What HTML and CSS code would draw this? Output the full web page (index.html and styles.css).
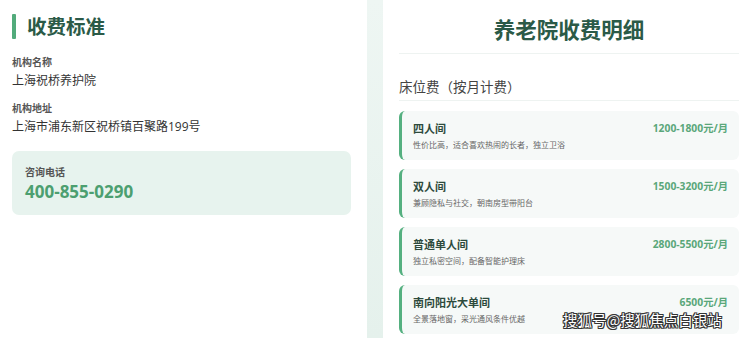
FILE: index.html
```html
<!DOCTYPE html>
<html lang="zh-CN">
<head>
<meta charset="utf-8">
<title>收费标准</title>
<link rel="stylesheet" href="styles.css">
</head>
<body>
<div class="page">
  <section class="left">
    <h2 class="heading"><span class="bar"></span>收费标准</h2>
    <div class="field">
      <div class="label">机构名称</div>
      <div class="value">上海祝桥养护院</div>
    </div>
    <div class="field field-2">
      <div class="label">机构地址</div>
      <div class="value">上海市浦东新区祝桥镇百聚路199号</div>
    </div>
    <div class="contact">
      <div class="label">咨询电话</div>
      <div class="phone">400-855-0290</div>
    </div>
  </section>
  <div class="gutter"></div>
  <section class="right">
    <h1 class="main-title">养老院收费明细</h1>
    <h3 class="sub-title">床位费（按月计费）</h3>
    <div class="cards">
      <div class="card">
        <div class="card-row">
          <span class="card-name">四人间</span>
          <span class="card-price">1200-1800元/月</span>
        </div>
        <div class="card-desc">性价比高，适合喜欢热闹的长者，独立卫浴</div>
      </div>
      <div class="card">
        <div class="card-row">
          <span class="card-name">双人间</span>
          <span class="card-price">1500-3200元/月</span>
        </div>
        <div class="card-desc">兼顾隐私与社交，朝南房型带阳台</div>
      </div>
      <div class="card">
        <div class="card-row">
          <span class="card-name">普通单人间</span>
          <span class="card-price">2800-5500元/月</span>
        </div>
        <div class="card-desc">独立私密空间，配备智能护理床</div>
      </div>
      <div class="card">
        <div class="card-row">
          <span class="card-name">南向阳光大单间</span>
          <span class="card-price">6500元/月</span>
        </div>
        <div class="card-desc">全景落地窗，采光通风条件优越</div>
      </div>
    </div>
  </section>
  <div class="watermark">搜狐号@搜狐焦点白银站</div>
</div>
</body>
</html>
```

FILE: styles.css
```css
* { box-sizing: border-box; margin: 0; padding: 0; }

html, body {
  width: 740px;
  height: 338px;
  overflow: hidden;
  background: #ffffff;
}

body {
  font-family: "Open Sans", "Noto Sans CJK SC", sans-serif;
  color: #333;
}

.page {
  position: relative;
  display: flex;
  width: 740px;
  height: 338px;
}

.left {
  width: 367px;
  padding: 14px 16px 0 12px;
  background: #fff;
}

.heading {
  display: flex;
  align-items: center;
  gap: 11px;
  height: 25px;
  font-size: 19.5px;
  font-weight: 700;
  color: #2b5a47;
  line-height: 25px;
}

.bar {
  width: 4px;
  height: 25px;
  background: #52ab7b;
  border-radius: 1px;
}

.field { margin-top: 16px; }
.field-2 { margin-top: 11px; }

.label {
  font-size: 10px;
  line-height: 14px;
  font-weight: 700;
  color: #555;
}

.value {
  margin-top: 3px;
  font-size: 12px;
  line-height: 18px;
  color: #333;
}

.contact {
  margin-top: 15px;
  padding: 14px 13px 12px 13px;
  background: #e7f3ee;
  border-radius: 7px;
}

.phone {
  margin-top: 2px;
  font-size: 17px;
  line-height: 22px;
  font-weight: 700;
  color: #4c9f70;
}

.gutter {
  width: 16px;
  background: linear-gradient(to bottom, #eef6f3, #e5f1ec);
}

.right {
  flex: 1;
  padding: 16px 1px 0 16px;
  background: #fff;
}

.main-title {
  font-size: 21.5px;
  line-height: 28px;
  font-weight: 700;
  color: #2b5a47;
  text-align: center;
  padding-bottom: 9px;
  border-bottom: 1px solid #eef3f1;
}

.sub-title {
  margin-top: 23px;
  padding-bottom: 3px;
  font-size: 13.5px;
  line-height: 20px;
  font-weight: 400;
  color: #444;
  border-bottom: 1px solid #eef3f1;
}

.cards {
  margin-top: 10px;
  display: flex;
  flex-direction: column;
  gap: 9px;
}

.card {
  height: 49px;
  padding: 10px 11px 9px 11px;
  background: #f6f9f8;
  border-left: 3px solid #55b080;
  border-radius: 6px;
}

.card-row {
  display: flex;
  justify-content: space-between;
  align-items: center;
  height: 15px;
}

.card-name {
  font-size: 11px;
  line-height: 15px;
  font-weight: 700;
  color: #2d4a3c;
}

.card-price {
  font-size: 10.3px;
  line-height: 15px;
  font-weight: 700;
  color: #5aa77a;
}

.card-desc {
  margin-top: 3px;
  font-size: 8px;
  line-height: 12px;
  color: #666;
}

.watermark {
  position: absolute;
  left: 563px;
  top: 310px;
  font-family: "Noto Sans CJK SC", sans-serif;
  font-size: 14.5px;
  line-height: 20px;
  color: #fff;
  text-shadow: -1px -1px 0 #333, 1px -1px 0 #333, -1px 1px 0 #333, 1px 1px 0 #333, 0 1px 0 #333, 1px 0 0 #333, 0 -1px 0 #333, -1px 0 0 #333;
}
```
